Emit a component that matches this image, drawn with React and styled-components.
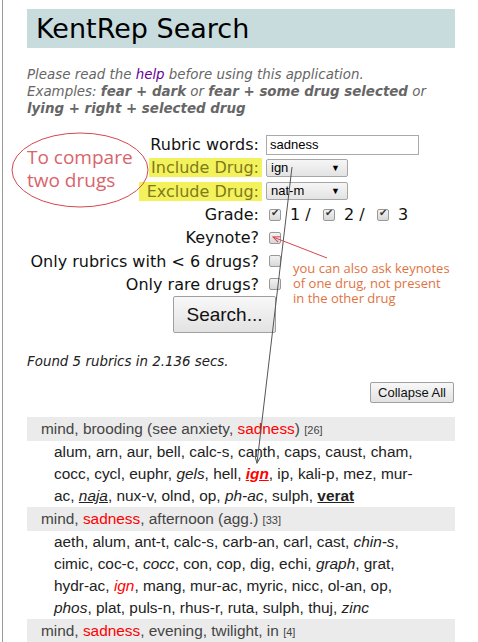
import styled, { createGlobalStyle } from "styled-components";

const GlobalStyle = createGlobalStyle`
  html, body {
    margin: 0;
    padding: 0;
    background: #fff;
  }
  body {
    font-family: "DejaVu Sans", Verdana, sans-serif;
    overflow: hidden;
  }
`;

const rubrics = [
  {
    title: [["mind, brooding (see anxiety, "], ["sadness", "hit"], [")"]],
    count: 26,
    drugs: [
      "alum", "arn", "aur", "bell", "calc-s", "canth", "caps", "caust", "cham",
      "cocc", "cycl", "euphr", ["gels", "i"], "hell", ["ign", "bu-hit"], "ip",
      "kali-p", "mez", "mur-ac", ["naja", "iu"], "nux-v", "olnd", "op",
      ["ph-ac", "i"], "sulph", ["verat", "bu"],
    ],
  },
  {
    title: [["mind, "], ["sadness", "hit"], [", afternoon (agg.)"]],
    count: 33,
    drugs: [
      "aeth", "alum", "ant-t", "calc-s", "carb-an", "carl", "cast", ["chin-s", "i"],
      "cimic", "coc-c", ["cocc", "i"], "con", "cop", "dig", "echi", ["graph", "i"],
      "grat", "hydr-ac", ["ign", "hit"], "mang", "mur-ac", "myric", "nicc", "ol-an",
      "op", ["phos", "i"], "plat", "puls-n", "rhus-r", "ruta", "sulph", "thuj",
      ["zinc", "i"],
    ],
  },
  {
    title: [["mind, "], ["sadness", "hit"], [", evening, twilight, in"]],
    count: 4,
    drugs: [],
  },
];

export default function App() {
  return (
    <Root>
      <GlobalStyle />
      <Page>
        <Header>KentRep Search</Header>
        <Intro>
          Please read the <HelpLink>help</HelpLink> before using this application.
          <br />
          Examples: <b>fear + dark</b> or <b>fear + some drug selected</b> or{" "}
          <b>lying + right + selected drug</b>
        </Intro>

        <Form>
          <Label>Rubric words:</Label>
          <TextInput>sadness</TextInput>

          <Label $highlight>Include Drug:</Label>
          <Select>
            ign<Arrow>▼</Arrow>
          </Select>

          <Label $highlight $wide>Exclude Drug:</Label>
          <Select>
            nat-m<Arrow>▼</Arrow>
          </Select>

          <Label>Grade:</Label>
          <Grades>
            <Check $checked />
            <GradeText>1 /</GradeText>
            <Check $checked />
            <GradeText>2 /</GradeText>
            <Check $checked />
            <GradeText>3</GradeText>
          </Grades>

          <Label>Keynote?</Label>
          <Controls>
            <Check />
          </Controls>

          <Label>Only rubrics with &lt; 6 drugs?</Label>
          <Controls>
            <Check />
          </Controls>

          <Label>Only rare drugs?</Label>
          <Controls>
            <Check />
          </Controls>
        </Form>

        <SearchRow>
          <SearchButton>Search...</SearchButton>
        </SearchRow>

        <Found>Found 5 rubrics in 2.136 secs.</Found>

        <CollapseRow>
          <CollapseButton>Collapse All</CollapseButton>
        </CollapseRow>

        <Results>
          {rubrics.map((r, i) => (
            <div key={i}>
              <RubricHead>
                {r.title.map(([t, k], j) =>
                  k ? <Hit key={j}>{t}</Hit> : <span key={j}>{t}</span>
                )}{" "}
                <Count>[{r.count}]</Count>
              </RubricHead>
              {r.drugs.length > 0 && (
                <Drugs>
                  {r.drugs.map((d, j) => {
                    const [name, kind] = Array.isArray(d) ? d : [d, ""];
                    const sep = j < r.drugs.length - 1 ? ", " : "";
                    return (
                      <span key={j}>
                        <Drug
                          $italic={kind.includes("i")}
                          $bold={kind.includes("b")}
                          $under={kind.includes("u")}
                          $hit={kind.includes("hit")}
                        >
                          {name}
                        </Drug>
                        {sep}
                      </span>
                    );
                  })}
                </Drugs>
              )}
            </div>
          ))}
        </Results>
      </Page>

      <Overlay width="478" height="642" viewBox="0 0 478 642">
        <defs>
          <marker id="redHead" markerWidth="8" markerHeight="8" refX="7" refY="4" orient="auto">
            <path d="M0,1 L7,4 L0,7" fill="none" stroke="#d9464f" strokeWidth="1" />
          </marker>
          <marker id="grayHead" markerWidth="8" markerHeight="8" refX="7" refY="4" orient="auto">
            <path d="M0,1 L7,4 L0,7" fill="none" stroke="#555" strokeWidth="1" />
          </marker>
        </defs>
        <ellipse cx="80" cy="170" rx="68" ry="37" fill="none" stroke="#d9464f" strokeWidth="1" />
        <line x1="292" y1="167" x2="257" y2="463" stroke="#555" strokeWidth="1" markerEnd="url(#grayHead)" />
        <line x1="327" y1="258" x2="273" y2="237" stroke="#d9464f" strokeWidth="1" markerEnd="url(#redHead)" />
      </Overlay>
      <CompareNote>
        To compare
        <br />
        two drugs
      </CompareNote>
      <KeynoteNote>
        you can also ask keynotes
        <br />
        of one drug, not present
        <br />
        in the other drug
      </KeynoteNote>
    </Root>
  );
}

const Root = styled.div`
  position: relative;
  width: 478px;
  height: 642px;
  overflow: hidden;
`;

const Page = styled.div`
  margin-left: 2px;
  border-left: 1px solid #9a9a9a;
  min-height: 642px;
  padding: 9px 23px 0 24px;
  box-sizing: border-box;
`;

const Header = styled.h1`
  margin: 0;
  height: 39px;
  background: #c8dcde;
  padding-left: 9px;
  font-family: "DejaVu Sans", Verdana, sans-serif;
  font-weight: normal;
  font-size: 27px;
  line-height: 40px;
  color: #000;
`;

const Intro = styled.p`
  margin: 18px 0 0;
  font-size: 13.4px;
  line-height: 17px;
  font-style: italic;
  color: #666;

  b {
    color: #666;
  }
`;

const HelpLink = styled.a`
  color: #660099;
  text-decoration: none;
`;

const Form = styled.div`
  display: grid;
  grid-template-columns: 232px 1fr;
  column-gap: 7px;
  grid-auto-rows: 23.3px;
  margin-top: 16px;
  align-items: center;
`;

const Label = styled.div`
  justify-self: end;
  font-size: 16px;
  color: ${(p) => (p.$highlight ? "#7d7a1c" : "#111")};
  background: ${(p) => (p.$highlight ? "#f4f25c" : "transparent")};
  padding: ${(p) => (p.$highlight ? (p.$wide ? "0 3px 0 8px" : "0 3px 0 2px") : "0")};
  margin-right: ${(p) => (p.$highlight ? "-3px" : "0")};
  line-height: 19px;
  white-space: nowrap;
`;

const TextInput = styled.div`
  width: 148px;
  height: 18px;
  border: 1px solid #a9a9a9;
  font-family: "Liberation Sans", Arial, sans-serif;
  font-size: 13px;
  line-height: 18px;
  padding-left: 3px;
  color: #000;
`;

const Select = styled.div`
  width: 76px;
  height: 16px;
  border: 1px solid #a6a6a6;
  border-radius: 2px;
  background: linear-gradient(#f6f6f6, #e3e3e3);
  font-family: "Liberation Sans", Arial, sans-serif;
  font-size: 13px;
  line-height: 16px;
  padding-left: 4px;
  display: flex;
  justify-content: space-between;
  color: #000;
`;

const Arrow = styled.span`
  font-size: 9px;
  padding-right: 7px;
`;

const Controls = styled.div`
  display: flex;
  align-items: center;
  padding-left: 3px;
`;

const Grades = styled(Controls)`
  font-size: 16px;
  color: #111;
`;

const GradeText = styled.span`
  width: 33px;
  padding-left: 3px;
  white-space: nowrap;
`;

const Check = styled.span`
  display: inline-block;
  flex: none;
  box-sizing: border-box;
  width: 12px;
  height: 12px;
  margin-right: 6px;
  border: 1px solid #999;
  border-radius: 2px;
  background: linear-gradient(#f2f2f2, #d8d8d8);
  position: relative;

  &::after {
    content: ${(p) => (p.$checked ? '"✔"' : '""')};
    position: absolute;
    left: 1px;
    top: -3px;
    font-size: 10px;
    color: #333;
  }
`;

const SearchRow = styled.div`
  padding-left: 146px;
  margin-top: 0;
`;

const SearchButton = styled.button`
  width: 103px;
  height: 37px;
  border: 1px solid #a0a0a0;
  border-radius: 2px;
  background: linear-gradient(#f8f8f8, #e2e2e2);
  font-family: "Liberation Sans", Arial, sans-serif;
  font-size: 19px;
  color: #111;
  padding: 0;
`;

const Found = styled.p`
  margin: 20px 0 0;
  font-size: 13.4px;
  font-style: italic;
  color: #222;
  line-height: 17px;
`;

const CollapseRow = styled.div`
  display: flex;
  justify-content: flex-end;
  margin-top: 12px;
  padding-right: 1px;
`;

const CollapseButton = styled.button`
  height: 21px;
  border: 1px solid #a0a0a0;
  border-radius: 2px;
  background: linear-gradient(#f8f8f8, #e2e2e2);
  font-family: "Liberation Sans", Arial, sans-serif;
  font-size: 13px;
  color: #111;
  padding: 0 7px;
`;

const Results = styled.div`
  margin-top: 14px;
  font-family: "Liberation Sans", Arial, sans-serif;
`;

const RubricHead = styled.div`
  background: #ebebeb;
  height: 24px;
  line-height: 24px;
  padding-left: 14px;
  font-size: 15.4px;
  color: #444;
`;

const Hit = styled.span`
  color: #f00;
`;

const Count = styled.span`
  font-size: 11px;
`;

const Drugs = styled.div`
  padding: 0 30px 0 27px;
  font-size: 15.4px;
  line-height: 22px;
  color: #222;
`;

const Drug = styled.span`
  font-style: ${(p) => (p.$italic ? "italic" : "normal")};
  font-weight: ${(p) => (p.$bold ? "bold" : "normal")};
  text-decoration: ${(p) => (p.$under ? "underline" : "none")};
  color: ${(p) => (p.$hit ? "#f00" : "inherit")};
`;

const Overlay = styled.svg`
  position: absolute;
  top: 0;
  left: 0;
  pointer-events: none;
`;

const CompareNote = styled.div`
  position: absolute;
  left: 27px;
  top: 146px;
  font-family: "Open Sans", sans-serif;
  font-size: 19px;
  line-height: 23px;
  color: #d9646b;
`;

const KeynoteNote = styled.div`
  position: absolute;
  left: 293px;
  top: 261px;
  font-family: "Open Sans", sans-serif;
  font-size: 13px;
  line-height: 15px;
  color: #e0733f;
`;
